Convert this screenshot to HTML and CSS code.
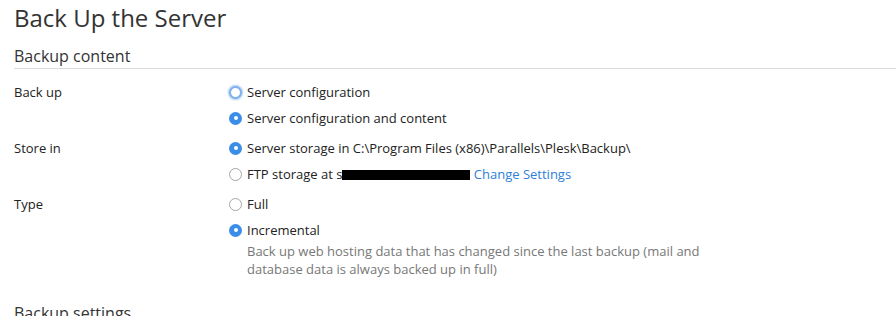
FILE: index.html
```html
<!DOCTYPE html>
<html>
<head>
<meta charset="utf-8">
<link rel="stylesheet" href="styles.css">
</head>
<body>
<div class="page">
  <h1 class="title">Back Up the Server</h1>
  <h2 class="section">Backup content</h2>
  <div class="form">
    <div class="row">
      <div class="label">Back up</div>
      <div class="field">
        <div class="option"><span class="radio focus"></span><span>Server configuration</span></div>
        <div class="option"><span class="radio checked"></span><span>Server configuration and content</span></div>
      </div>
    </div>
    <div class="row">
      <div class="label">Store in</div>
      <div class="field">
        <div class="option"><span class="radio checked"></span><span>Server storage in C:\Program Files (x86)\Parallels\Plesk\Backup\</span></div>
        <div class="option"><span class="radio"></span><span>FTP storage at s<span class="redact"></span> <a class="link" href="#">Change Settings</a></span></div>
      </div>
    </div>
    <div class="row">
      <div class="label">Type</div>
      <div class="field">
        <div class="option"><span class="radio"></span><span>Full</span></div>
        <div class="option"><span class="radio checked"></span><span>Incremental</span></div>
        <div class="hint">Back up web hosting data that has changed since the last backup (mail and<br>database data is always backed up in full)</div>
      </div>
    </div>
  </div>
  <h2 class="section next">Backup settings</h2>
</div>
</body>
</html>
```
FILE: styles.css
```css
html, body {
  margin: 0;
  padding: 0;
  background: #fff;
}
body {
  font-family: "Open Sans", "Noto Sans", sans-serif;
  font-size: 13px;
  color: #222;
  overflow: hidden;
}
.page {
  padding: 2px 0 0 14px;
}
.title {
  margin: 0;
  font-size: 24px;
  font-weight: 400;
  line-height: 32px;
  color: #333;
}
.section {
  margin: 10px 0 0 0;
  font-size: 16px;
  font-weight: 400;
  line-height: 24px;
  color: #333;
  border-bottom: 1px solid #d9d9d9;
}
.section.next {
  margin-top: 23px;
  border-bottom: none;
}
.form {
  margin-top: 14px;
  display: flex;
  flex-direction: column;
  gap: 12px;
}
.row {
  display: grid;
  grid-template-columns: 215px 1fr;
}
.label {
  line-height: 18px;
}
.field {
  display: flex;
  flex-direction: column;
  gap: 8px;
}
.option {
  display: flex;
  align-items: center;
  gap: 5px;
  line-height: 18px;
  white-space: nowrap;
}
.radio {
  box-sizing: border-box;
  width: 13px;
  height: 13px;
  border-radius: 50%;
  border: 1px solid #a6a6a6;
  background: #fff;
  flex: none;
  position: relative;
}
.radio.focus {
  border: 2px solid #7fb1ec;
  box-shadow: 0 0 2px 1px #a8cbf3;
}
.radio.checked {
  border: none;
  background: #3a8ee8;
}
.radio.checked::after {
  content: "";
  position: absolute;
  left: 4.5px;
  top: 4.5px;
  width: 4px;
  height: 4px;
  border-radius: 50%;
  background: #fff;
}
.redact {
  display: inline-block;
  width: 128px;
  height: 10px;
  background: #000;
  vertical-align: -1px;
}
.link {
  color: #2e80d8;
  text-decoration: none;
}
.hint {
  margin-top: -5px;
  padding-left: 18px;
  line-height: 18px;
  color: #777;
}
```
